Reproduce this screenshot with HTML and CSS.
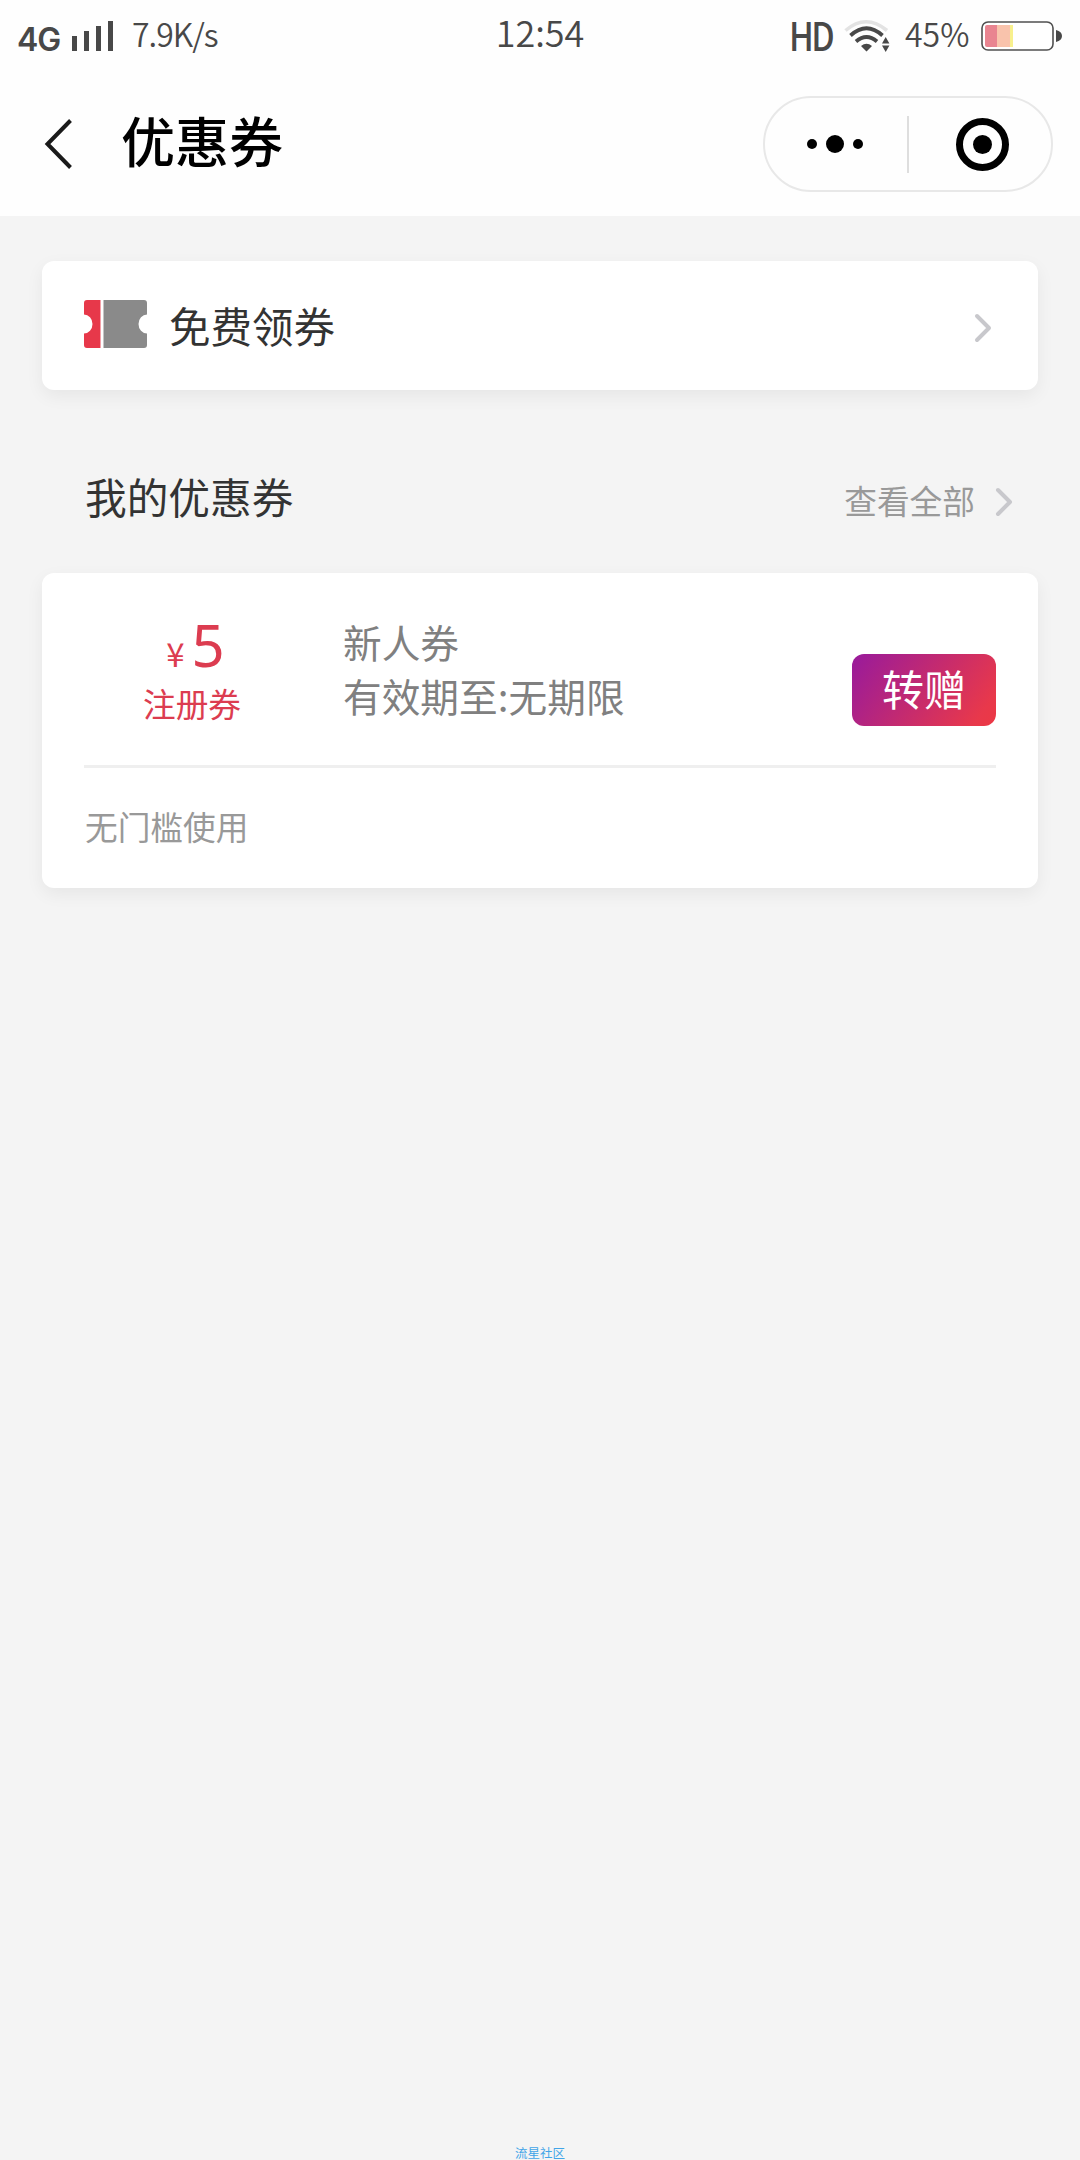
FILE: index.html
```html
<!DOCTYPE html>
<html lang="zh-CN">
<head>
<meta charset="utf-8">
<title>优惠券</title>
<link rel="stylesheet" href="styles.css">
</head>
<body>
<div class="screen">
  <header class="header">
    <div class="status">
      <div class="status-left">
        <span class="network">4G</span>
        <svg class="signal" width="42" height="30" viewBox="0 0 42 30" fill="#484848"><path d="M0 15h5v15H0zM12 10h5v20h-5zM24 5h5v25h-5zM36 0h5v30h-5z"/></svg>
        <span class="speed">7.9K/s</span>
      </div>
      <span class="clock">12:54</span>
      <div class="status-right">
        <span class="hd">HD</span>
        <svg class="wifi" width="46" height="34" viewBox="0 0 46 34" fill="none">
          <path d="M1.5 11.5Q22 -6 43 11.5" stroke="#e3e3e3" stroke-width="3.6"/>
          <path d="M6.5 16.5Q22.500 2 38.500 16.5" stroke="#484848" stroke-width="3.800"/>
          <path d="M12 22.500Q22.500 13.500 33 22.500" stroke="#484848" stroke-width="3.800"/>
          <path d="M17 27Q22.500 22.500 28 27L22.500 32.500ZM38 24.500h7.400l-3.700-6.500ZM38 26.500h7.400l-3.700 6.500Z" fill="#484848"/>
        </svg>
        <span class="percent">45%</span>
        <svg class="battery" width="82" height="30" viewBox="0 0 82 30">
          <rect x="1" y="1" width="71" height="28" rx="6" fill="#fff" stroke="#505050" stroke-width="1.600"/>
          <path d="M6 4h10v22H6a2 2 0 0 1-2-2V6a2 2 0 0 1 2-2z" fill="#e98490"/>
          <path d="M16 4h13v22H16z" fill="#f9c3ac"/>
          <path d="M29 4h3v22h-3z" fill="#f8f08d"/>
          <path d="M75 9q6 1.500 6 6t-6 6z" fill="#484848"/>
        </svg>
      </div>
    </div>
    <nav class="nav">
      <svg class="back" width="28" height="52" viewBox="0 0 28 52" fill="none"><path d="M26.500 2.500L3.500 26L26.500 49.500" stroke="#1a1a1a" stroke-width="4"/></svg>
      <h1 class="title">优惠券</h1>
      <div class="capsule">
        <svg class="more" width="58" height="20" viewBox="0 0 58 20"><circle cx="6" cy="10" r="5"/><circle cx="29" cy="10" r="9"/><circle cx="52" cy="10" r="5"/></svg>
        <span class="capsule-line"></span>
        <svg class="close" width="54" height="54" viewBox="0 0 54 54"><circle cx="27.500" cy="27.500" r="23" fill="none" stroke="#000" stroke-width="7"/><circle cx="27.500" cy="27.500" r="9.500"/></svg>
      </div>
    </nav>
  </header>
  <main class="main">
    <a class="card claim">
      <svg class="ticket" width="63" height="48" viewBox="0 0 63 48">
        <path d="M3 0H16V48H3Q0 48 0 45V33.500A8.500 9.500 0 0 0 0 14.500V3Q0 0 3 0Z" fill="#e7384a"/>
        <path d="M16 0h1v48h-1z" fill="#f4a0a8"/>
        <path d="M19.500 0H60Q63 0 63 3V14.500A8.500 9.500 0 0 0 63 33.500V45Q63 48 60 48H19.500Z" fill="#8a8a8a"/>
      </svg>
      <span class="claim-label">免费领券</span>
      <svg class="arrow" width="18" height="30" viewBox="0 0 18 30"><path d="M3 3L15 15L3 27"/></svg>
    </a>
    <div class="section">
      <h2 class="section-title">我的优惠券</h2>
      <span class="view-all">查看全部</span>
      <svg class="arrow" width="18" height="30" viewBox="0 0 18 30"><path d="M3 3L15 15L3 27"/></svg>
    </div>
    <article class="card coupon">
      <div class="coupon-top">
        <div class="value">
          <div class="price"><span class="yen">¥</span><span class="amount">5</span></div>
          <div class="kind">注册券</div>
        </div>
        <div class="info"><div>新人券</div><div>有效期至:无期限</div></div>
        <button class="give">转赠</button>
      </div>
      <div class="rule">无门槛使用</div>
    </article>
  </main>
  <footer class="footer">流星社区</footer>
</div>
</body>
</html>
```
FILE: styles.css
```css
* { box-sizing: border-box; }
body {
  margin: 0;
  font-family: "Noto Sans CJK SC", sans-serif;
  background: #f4f4f4;
  color: #333;
}
svg { display: block; flex: none; }
.screen {
  width: 1080px;
  height: 2160px;
  display: flex;
  flex-direction: column;
  overflow: hidden;
}
.header { height: 216px; background: #fefefe; }
.status {
  height: 72px;
  display: grid;
  grid-template-columns: 1fr auto 1fr;
  color: #484848;
  white-space: nowrap;
}
.status-left, .status-right { display: flex; align-items: flex-start; }
.status-left { padding-left: 17px; }
.network {
  width: 55px;
  margin-top: 20px;
  font: 600 32px/40px Inter, sans-serif;
  letter-spacing: -1px;
}
.signal { margin-top: 21px; }
.speed { margin: 9px 0 0 18px; font-size: 32px; line-height: 48px; font-weight: 350; letter-spacing: -1px; }
.clock { margin-top: 5px; font-size: 36px; line-height: 52px; font-weight: 350; }
.status-right { justify-content: flex-end; padding-right: 17px; }
.hd {
  width: 55px;
  margin-top: 10px;
  font-size: 39px;
  line-height: 48px;
  font-weight: 500;
  letter-spacing: -3px;
  transform: scaleX(.86);
  transform-origin: left;
}
.wifi { margin-top: 19px; }
.percent { width: 91px; padding-left: 15px; margin-top: 9px; font-size: 32px; line-height: 48px; font-weight: 350; }
.battery { margin-top: 21px; }
.nav { height: 144px; display: flex; align-items: center; padding: 0 27px 0 44px; }
.title {
  margin: -8px 0 0 49px;
  color: #000;
  font-family: KaiTi, STKaiti, "Noto Sans CJK SC", sans-serif;
  font-size: 54px;
  font-weight: 500;
  line-height: 72px;
}
.capsule {
  width: 290px;
  height: 96px;
  margin-left: auto;
  display: flex;
  align-items: center;
  border: 2px solid #e8e8e8;
  border-radius: 48px;
}
.more { margin-left: 41px; }
.capsule-line { width: 2px; height: 57px; margin-left: 43px; background: #dedede; }
.close { margin-left: 46px; }
.main { flex: 1; padding: 45px 42px 0; }
.card {
  background: #fff;
  border-radius: 12px;
  box-shadow: 0 6px 18px rgba(0, 0, 0, .06);
}
.claim { height: 129px; display: flex; align-items: center; padding: 0 46px 0 42px; }
.ticket { margin-top: -3px; }
.claim-label { margin: -1px 0 0 22px; font-size: 41.500px; line-height: 60px; }
.arrow { margin-left: auto; margin-top: 5px; fill: none; stroke: #c8c8cc; stroke-width: 4; stroke-linecap: round; stroke-linejoin: round; }
.section { height: 183px; padding: 36px 25px 0 43px; display: flex; align-items: center; }
.section-title { margin: -8px 0 0; font-size: 41.700px; line-height: 60px; font-weight: 400; }
.view-all { margin: 0 0 0 auto; color: #999; font-size: 32.700px; line-height: 48px; }
.section .arrow { margin-left: 20px; }
.coupon { height: 315px; padding: 0 42px; }
.coupon-top { height: 195px; display: flex; border-bottom: 3px solid #efefef; }
.value { width: 216px; padding-top: 41px; text-align: center; color: #dc3c50; }
.price {
  height: 65px;
  padding-left: 7px;
  display: flex;
  justify-content: center;
  align-items: baseline;
  font-family: "Noto Sans", sans-serif;
}
.yen { font-family: "Noto Sans CJK SC", sans-serif; font-size: 33px; line-height: 48px; }
.amount { margin-left: 7px; font-size: 58px; line-height: 62px; }
.kind { font-size: 32.700px; line-height: 48px; }
.info { margin-left: 43px; padding-top: 41px; color: #808080; font-size: 38.700px; line-height: 54px; white-space: nowrap; }
.give {
  width: 144px;
  height: 72px;
  margin: 81px 0 0 auto;
  padding: 0 0 4px;
  border: 0;
  border-radius: 12px;
  background: linear-gradient(125deg, #981a9c 0%, #e8384b 88%, #ec3844 100%);
  color: #fff;
  font: 400 42px/68px "Noto Sans CJK SC", sans-serif;
}
.rule { padding: 34px 0 0 1px; color: #999; font-size: 32.700px; line-height: 48px; }
.footer { height: 17px; color: #42a5e8; text-align: center; font-size: 12.500px; line-height: 20px; }
```
